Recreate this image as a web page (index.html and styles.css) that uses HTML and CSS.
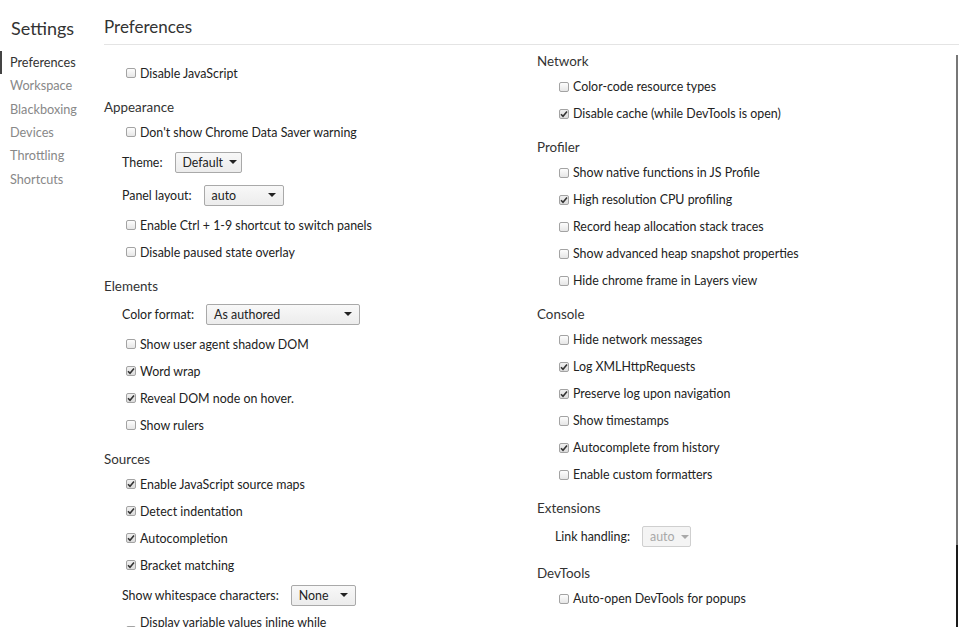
FILE: index.html
```html
<!DOCTYPE html>
<html>
<head>
<meta charset="utf-8">
<link rel="stylesheet" href="styles.css">
</head>
<body>
<div class="app">
  <aside class="sidebar">
    <div class="sidebar-title">Settings</div>
    <nav class="nav">
      <div class="nav-item active">Preferences</div>
      <div class="nav-item">Workspace</div>
      <div class="nav-item">Blackboxing</div>
      <div class="nav-item">Devices</div>
      <div class="nav-item">Throttling</div>
      <div class="nav-item">Shortcuts</div>
    </nav>
  </aside>
  <main class="main">
    <header class="main-header">Preferences</header>
    <div class="columns">
      <div class="col">
        <section class="section first">
          <div class="section-spacer"></div>
          <label class="row-cb"><span class="cb"></span><span>Disable JavaScript</span></label>
        </section>
        <section class="section">
          <div class="section-title">Appearance</div>
          <label class="row-cb"><span class="cb"></span><span>Don't show Chrome Data Saver warning</span></label>
          <div class="row-select"><span>Theme:</span><div class="select w-theme"><span>Default</span><svg class="arrow" width="8" height="4" viewBox="0 0 8 4"><path d="M0 0h8L4 4z"/></svg></div></div>
          <div class="row-select"><span>Panel layout:</span><div class="select w-layout"><span>auto</span><svg class="arrow" width="8" height="4" viewBox="0 0 8 4"><path d="M0 0h8L4 4z"/></svg></div></div>
          <label class="row-cb"><span class="cb"></span><span>Enable Ctrl + 1-9 shortcut to switch panels</span></label>
          <label class="row-cb"><span class="cb"></span><span>Disable paused state overlay</span></label>
        </section>
        <section class="section">
          <div class="section-title">Elements</div>
          <div class="row-select"><span>Color format:</span><div class="select w-color"><span>As authored</span><svg class="arrow" width="8" height="4" viewBox="0 0 8 4"><path d="M0 0h8L4 4z"/></svg></div></div>
          <label class="row-cb"><span class="cb"></span><span>Show user agent shadow DOM</span></label>
          <label class="row-cb"><span class="cb checked"><svg width="8" height="8" viewBox="0 0 8 8"><path d="M1 4.2l2 2L7 1.5"/></svg></span><span>Word wrap</span></label>
          <label class="row-cb"><span class="cb checked"><svg width="8" height="8" viewBox="0 0 8 8"><path d="M1 4.2l2 2L7 1.5"/></svg></span><span>Reveal DOM node on hover.</span></label>
          <label class="row-cb"><span class="cb"></span><span>Show rulers</span></label>
        </section>
        <section class="section">
          <div class="section-title">Sources</div>
          <label class="row-cb"><span class="cb checked"><svg width="8" height="8" viewBox="0 0 8 8"><path d="M1 4.2l2 2L7 1.5"/></svg></span><span>Enable JavaScript source maps</span></label>
          <label class="row-cb"><span class="cb checked"><svg width="8" height="8" viewBox="0 0 8 8"><path d="M1 4.2l2 2L7 1.5"/></svg></span><span>Detect indentation</span></label>
          <label class="row-cb"><span class="cb checked"><svg width="8" height="8" viewBox="0 0 8 8"><path d="M1 4.2l2 2L7 1.5"/></svg></span><span>Autocompletion</span></label>
          <label class="row-cb"><span class="cb checked"><svg width="8" height="8" viewBox="0 0 8 8"><path d="M1 4.2l2 2L7 1.5"/></svg></span><span>Bracket matching</span></label>
          <div class="row-select"><span>Show whitespace characters:</span><div class="select w-ws"><span>None</span><svg class="arrow" width="8" height="4" viewBox="0 0 8 4"><path d="M0 0h8L4 4z"/></svg></div></div>
          <label class="row-cb wrap"><span class="cb"></span><span class="wrap-text">Display variable values inline while debugging</span></label>
        </section>
      </div>
      <div class="col col-right">
        <section class="section first">
          <div class="section-title">Network</div>
          <label class="row-cb"><span class="cb"></span><span>Color-code resource types</span></label>
          <label class="row-cb"><span class="cb checked"><svg width="8" height="8" viewBox="0 0 8 8"><path d="M1 4.2l2 2L7 1.5"/></svg></span><span>Disable cache (while DevTools is open)</span></label>
        </section>
        <section class="section">
          <div class="section-title">Profiler</div>
          <label class="row-cb"><span class="cb"></span><span>Show native functions in JS Profile</span></label>
          <label class="row-cb"><span class="cb checked"><svg width="8" height="8" viewBox="0 0 8 8"><path d="M1 4.2l2 2L7 1.5"/></svg></span><span>High resolution CPU profiling</span></label>
          <label class="row-cb"><span class="cb"></span><span>Record heap allocation stack traces</span></label>
          <label class="row-cb"><span class="cb"></span><span>Show advanced heap snapshot properties</span></label>
          <label class="row-cb"><span class="cb"></span><span>Hide chrome frame in Layers view</span></label>
        </section>
        <section class="section">
          <div class="section-title">Console</div>
          <label class="row-cb"><span class="cb"></span><span>Hide network messages</span></label>
          <label class="row-cb"><span class="cb checked"><svg width="8" height="8" viewBox="0 0 8 8"><path d="M1 4.2l2 2L7 1.5"/></svg></span><span>Log XMLHttpRequests</span></label>
          <label class="row-cb"><span class="cb checked"><svg width="8" height="8" viewBox="0 0 8 8"><path d="M1 4.2l2 2L7 1.5"/></svg></span><span>Preserve log upon navigation</span></label>
          <label class="row-cb"><span class="cb"></span><span>Show timestamps</span></label>
          <label class="row-cb"><span class="cb checked"><svg width="8" height="8" viewBox="0 0 8 8"><path d="M1 4.2l2 2L7 1.5"/></svg></span><span>Autocomplete from history</span></label>
          <label class="row-cb"><span class="cb"></span><span>Enable custom formatters</span></label>
        </section>
        <section class="section">
          <div class="section-title">Extensions</div>
          <div class="row-select"><span>Link handling:</span><div class="select disabled w-link"><span>auto</span><svg class="arrow" width="8" height="4" viewBox="0 0 8 4"><path d="M0 0h8L4 4z"/></svg></div></div>
        </section>
        <section class="section">
          <div class="section-title">DevTools</div>
          <label class="row-cb"><span class="cb"></span><span>Auto-open DevTools for popups</span></label>
        </section>
      </div>
    </div>
  </main>
  <div class="scroll-thumb"></div>
</div>
</body>
</html>
```

FILE: styles.css
```css
html, body {
  margin: 0;
  padding: 0;
  background: #fff;
}
body {
  font-family: Lato, "Noto Sans", sans-serif;
  font-size: 12.4px;
  color: #222;
}
.app {
  position: relative;
  display: flex;
  width: 959px;
  height: 627px;
  overflow: hidden;
}
.sidebar {
  flex: none;
  width: 104px;
}
.sidebar-title {
  padding: 12px 0 0 11px;
  height: 32px;
  line-height: 32px;
  font-size: 18px;
  color: #333;
}
.nav {
  padding-top: 6.8px;
}
.nav-item {
  height: 23.4px;
  line-height: 23.4px;
  padding-left: 10px;
  font-size: 12.7px;
  color: #888;
}
.nav-item.active {
  color: #333;
  padding-left: 8px;
  border-left: 2px solid #444;
}
.main {
  flex: 1;
  min-width: 0;
}
.main-header {
  padding-top: 16px;
  height: 22px;
  line-height: 22px;
  padding-bottom: 6px;
  border-bottom: 1px solid #e4e4e4;
  font-size: 17px;
  color: #333;
}
.columns {
  display: grid;
  grid-template-columns: 433px 1fr;
  padding-top: 4.5px;
}
.col-right {
  padding-top: 0.7px;
}
.section {
  margin-top: 9px;
}
.section.first {
  margin-top: 0;
}
.section-spacer {
  height: 10px;
}
.section-title {
  height: 23px;
  line-height: 23px;
  font-size: 13.4px;
  color: #333;
}
.row-cb {
  display: flex;
  align-items: center;
  height: 27px;
  padding-left: 22px;
}
.row-cb.wrap {
  height: auto;
  padding-top: 3px;
}
.wrap-text {
  max-width: 200px;
  line-height: 16px;
}
.cb {
  flex: none;
  box-sizing: border-box;
  width: 10px;
  height: 10px;
  margin-right: 4px;
  border: 1px solid #a3a3a3;
  border-radius: 2px;
  background: linear-gradient(#fdfdfd, #e6e6e6);
  display: flex;
  align-items: center;
  justify-content: center;
}
.cb.checked {
  background: linear-gradient(#f0f0f0, #dcdcdc);
}
.cb svg path {
  fill: none;
  stroke: #333;
  stroke-width: 1.6;
}
.row-select {
  display: flex;
  align-items: center;
  height: 33px;
  padding-left: 18px;
}
.select {
  box-sizing: border-box;
  height: 21px;
  margin-left: 12px;
  padding: 0 7px;
  display: flex;
  align-items: center;
  justify-content: space-between;
  gap: 6px;
  border: 1px solid #a9a9a9;
  border-radius: 2px;
  background: linear-gradient(#f8f8f8, #ececec);
  color: #222;
}
.select .arrow {
  flex: none;
}
.select .arrow path {
  fill: #222;
}
.select.disabled {
  border-color: #cfcfcf;
  background: #f4f4f4;
  color: #a8a8a8;
}
.select.disabled .arrow path {
  fill: #a8a8a8;
}
.w-theme { width: 67px; }
.w-layout { width: 80px; }
.w-color { width: 154px; }
.w-ws { width: 65px; }
.w-link { width: 49px; }
.scroll-thumb {
  position: absolute;
  right: 1px;
  top: 55px;
  width: 2px;
  height: 572px;
  background: linear-gradient(#777 0, #777 490px, #1a1a1a 490px);
}
```
